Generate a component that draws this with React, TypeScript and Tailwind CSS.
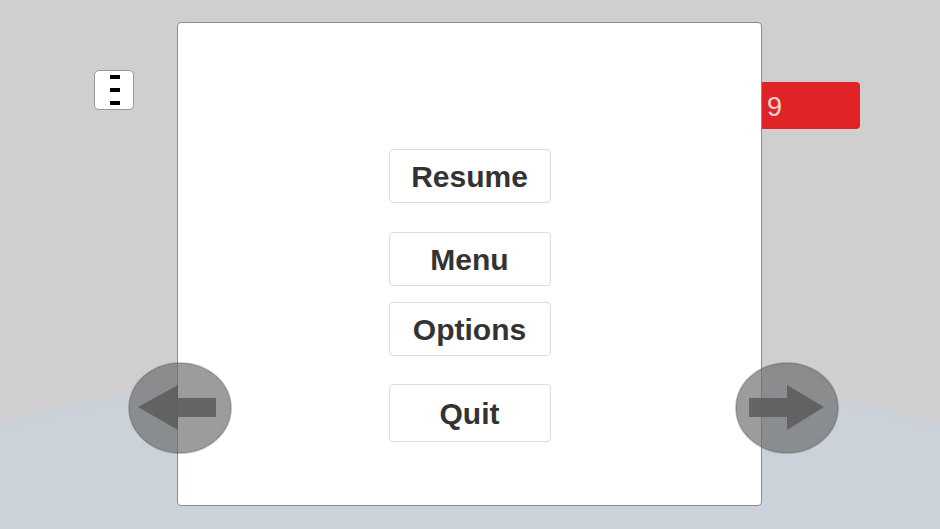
import React from 'react';

const buttons = [
  { label: 'Resume', cls: 'mt-0 h-[54px]' },
  { label: 'Menu', cls: 'mt-[29px] h-[54px]' },
  { label: 'Options', cls: 'mt-[16px] h-[54px]' },
  { label: 'Quit', cls: 'mt-[28px] h-[58px]' },
];

const Arrow: React.FC<{ dir: 'left' | 'right' }> = ({ dir }) => (
  <svg width="104" height="92" viewBox="0 0 104 92" className="block">
    <ellipse cx="52" cy="46" rx="51" ry="45" fill="rgba(104,104,104,0.66)" stroke="rgba(90,90,90,0.45)" strokeWidth="1.5" />
    {dir === 'left' ? (
      <polygon points="10,45 50,23 50,36 88,36 88,55 50,55 50,68" fill="rgba(88,88,88,0.8)" />
    ) : (
      <polygon points="14,36 52,36 52,23 89,45 52,68 52,55 14,55" fill="rgba(88,88,88,0.8)" />
    )}
  </svg>
);

const App: React.FC = () => {
  return (
    <div className="relative w-[940px] h-[529px] overflow-hidden bg-[#d0cece] font-['Liberation_Sans',Arial,sans-serif]">
      {/* ground */}
      <svg className="absolute inset-0" width="940" height="529" viewBox="0 0 940 529">
        <defs>
          <filter id="soft" x="-10%" y="-10%" width="120%" height="120%">
            <feGaussianBlur stdDeviation="7" />
          </filter>
        </defs>
        <circle cx="470" cy="2114" r="1755" fill="#cbd2da" filter="url(#soft)" />
      </svg>

      {/* pause toggle */}
      <button className="absolute left-[94px] top-[70px] w-[40px] h-[40px] rounded-[5px] bg-white border border-[#9a9a9a] flex flex-col items-center justify-center gap-[9px] pl-[2px]">
        <span className="block w-[10px] h-[4px] bg-black" />
        <span className="block w-[10px] h-[4px] bg-black" />
        <span className="block w-[10px] h-[4px] bg-black" />
      </button>

      {/* score */}
      <div className="absolute left-[740px] top-[82px] w-[120px] h-[47px] rounded-[4px] bg-[#e02326] flex items-center pl-[27px] pt-[4px] text-[27px] text-[#f6d2d2]">
        9
      </div>

      {/* pause dialog */}
      <div className="absolute left-[177px] top-[22px] w-[585px] h-[484px] bg-white border border-[#8c8c8c] rounded-[4px] flex flex-col items-center pt-[126px]">
        {buttons.map((b) => (
          <button
            key={b.label}
            className={`${b.cls} w-[162px] rounded-[4px] border border-[#dcdcdc] bg-white flex items-center justify-center text-[30px] font-bold text-[#333333]`}
          >
            {b.label}
          </button>
        ))}
      </div>

      {/* arrows */}
      <div className="absolute left-[128px] top-[362px]">
        <Arrow dir="left" />
      </div>
      <div className="absolute left-[735px] top-[362px]">
        <Arrow dir="right" />
      </div>
    </div>
  );
};

export default App;
